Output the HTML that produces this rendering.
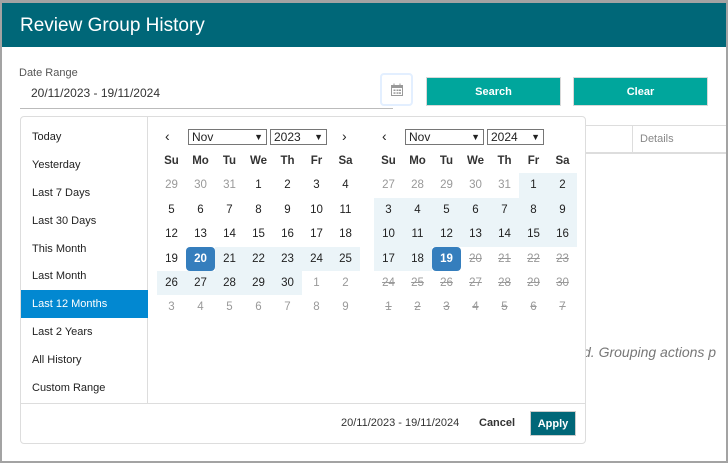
<!DOCTYPE html>
<html><head><meta charset="utf-8"><style>
*{box-sizing:border-box;margin:0;padding:0}
body{width:728px;height:463px;overflow:hidden;background:#a3a3a3;font-family:"Liberation Sans",Arial,sans-serif;position:relative;color:#222}
.abs{position:absolute}
#main{left:2px;top:3px;width:724px;height:458px;background:#fff}
#hdr{left:2px;top:3px;width:724px;height:44px;background:#006778;color:#fff;font-size:19px;padding:12px 0 0 18px}
.btn{top:77px;height:29px;background:#00a69c;color:#fff;font-weight:bold;font-size:11px;text-align:center;line-height:29px;border:1px solid #d8d8d8}
.g{display:grid;grid-template-columns:repeat(7,29px);grid-auto-rows:24.4px;font-size:11.5px}
.g div{text-align:center;line-height:24.4px}
.h{font-weight:bold;color:#333}
.o{color:#999}
.x{color:#999;text-decoration:line-through}
.r{background:#ebf4f8}
.s{background:#357ebd;color:#fff;font-weight:bold;border-radius:4px}
.sel{height:16px;border:1px solid #767676;font-size:12px;padding-left:3px;line-height:14px;background:#fff}
.sel span{position:absolute;right:3px;top:0;font-size:9px}
.rng{left:0;width:127px;height:28px;font-size:11px;padding-left:11px;line-height:28px;color:#222}
</style></head><body>
<div class="abs" id="main"></div>
<div class="abs" id="hdr">Review Group History</div>
<div class="abs" style="left:19px;top:67px;font-size:11px;color:#555">Date Range</div>
<div class="abs" style="left:31px;top:86px;font-size:12px;color:#333">20/11/2023 - 19/11/2024</div>
<div class="abs" style="left:20px;top:108px;width:373px;height:1px;background:#bbb"></div>
<div class="abs" style="left:380px;top:73px;width:33px;height:33px;border:2px solid #e3efff;border-radius:4px">
<svg width="14" height="14" viewBox="0 0 14 14" style="position:absolute;left:8px;top:8px"><rect x="1.5" y="2.5" width="11" height="10" fill="none" stroke="#999"/><rect x="1.5" y="2.5" width="11" height="2.5" fill="#999"/><rect x="3.5" y="0.5" width="1" height="2.5" fill="#999"/><rect x="9.5" y="0.5" width="1" height="2.5" fill="#999"/><g fill="#999"><rect x="3.5" y="6.5" width="2" height="1.5"/><rect x="6.5" y="6.5" width="2" height="1.5"/><rect x="9" y="6.5" width="2" height="1.5"/><rect x="3.5" y="9.3" width="2" height="1.5"/><rect x="6.5" y="9.3" width="2" height="1.5"/><rect x="9" y="9.3" width="2" height="1.5"/></g></svg></div>
<div class="abs btn" style="left:426px;width:135px">Search</div>
<div class="abs btn" style="left:573px;width:135px">Clear</div>
<div class="abs" style="left:585px;top:125px;width:141px;height:29px;border-top:1px solid #ddd;border-bottom:2px solid #ddd"></div>
<div class="abs" style="left:632px;top:126px;width:1px;height:27px;background:#ddd"></div>
<div class="abs" style="left:640px;top:133px;font-size:11px;color:#888">Details</div>
<div class="abs" style="left:583px;top:344px;font-size:14px;color:#777;font-style:italic;white-space:nowrap">d. Grouping actions p</div>
<div class="abs" style="left:20px;top:116px;width:566px;height:328px;background:#fff;border:1px solid #ddd;border-radius:4px"></div>
<div class="abs" style="left:147px;top:117px;width:1px;height:286px;background:#ddd"></div>
<div class="abs" style="left:21px;top:403px;width:564px;height:1px;background:#ddd"></div>
<div class="abs" style="left:21px;top:123px;width:127px">
<div class="abs rng" style="top:0">Today</div>
<div class="abs rng" style="top:28px">Yesterday</div>
<div class="abs rng" style="top:56px">Last 7 Days</div>
<div class="abs rng" style="top:84px">Last 30 Days</div>
<div class="abs rng" style="top:112px">This Month</div>
<div class="abs rng" style="top:139px">Last Month</div>
<div class="abs rng" style="top:167px;background:#0288d1;color:#fff">Last 12 Months</div>
<div class="abs rng" style="top:195px">Last 2 Years</div>
<div class="abs rng" style="top:223px">All History</div>
<div class="abs rng" style="top:251px">Custom Range</div>
</div>
<div class="abs" style="left:165px;top:128px;font-size:14px">‹</div>
<div class="abs sel" style="left:188px;top:129px;width:79px">Nov<span>▼</span></div>
<div class="abs sel" style="left:270px;top:129px;width:57px">2023<span>▼</span></div>
<div class="abs" style="left:342px;top:128px;font-size:14px">›</div>
<div class="abs" style="left:382px;top:128px;font-size:14px">‹</div>
<div class="abs sel" style="left:405px;top:129px;width:79px">Nov<span>▼</span></div>
<div class="abs sel" style="left:487px;top:129px;width:57px">2024<span>▼</span></div>
<div class="abs g" style="left:157px;top:149px">
<div class="h">Su</div><div class="h">Mo</div><div class="h">Tu</div><div class="h">We</div><div class="h">Th</div><div class="h">Fr</div><div class="h">Sa</div>
<div class="o">29</div><div class="o">30</div><div class="o">31</div><div>1</div><div>2</div><div>3</div><div>4</div>
<div>5</div><div>6</div><div>7</div><div>8</div><div>9</div><div>10</div><div>11</div>
<div>12</div><div>13</div><div>14</div><div>15</div><div>16</div><div>17</div><div>18</div>
<div>19</div><div class="s">20</div><div class="r">21</div><div class="r">22</div><div class="r">23</div><div class="r">24</div><div class="r">25</div>
<div class="r">26</div><div class="r">27</div><div class="r">28</div><div class="r">29</div><div class="r">30</div><div class="o">1</div><div class="o">2</div>
<div class="o">3</div><div class="o">4</div><div class="o">5</div><div class="o">6</div><div class="o">7</div><div class="o">8</div><div class="o">9</div>
</div>
<div class="abs g" style="left:374px;top:149px">
<div class="h">Su</div><div class="h">Mo</div><div class="h">Tu</div><div class="h">We</div><div class="h">Th</div><div class="h">Fr</div><div class="h">Sa</div>
<div class="o">27</div><div class="o">28</div><div class="o">29</div><div class="o">30</div><div class="o">31</div><div class="r">1</div><div class="r">2</div>
<div class="r">3</div><div class="r">4</div><div class="r">5</div><div class="r">6</div><div class="r">7</div><div class="r">8</div><div class="r">9</div>
<div class="r">10</div><div class="r">11</div><div class="r">12</div><div class="r">13</div><div class="r">14</div><div class="r">15</div><div class="r">16</div>
<div class="r">17</div><div class="r">18</div><div class="s">19</div><div class="x">20</div><div class="x">21</div><div class="x">22</div><div class="x">23</div>
<div class="x">24</div><div class="x">25</div><div class="x">26</div><div class="x">27</div><div class="x">28</div><div class="x">29</div><div class="x">30</div>
<div class="x">1</div><div class="x">2</div><div class="x">3</div><div class="x">4</div><div class="x">5</div><div class="x">6</div><div class="x">7</div>
</div>
<div class="abs" style="left:341px;top:417px;font-size:11px;color:#333">20/11/2023 - 19/11/2024</div>
<div class="abs" style="left:479px;top:417px;font-size:11px;color:#333;font-weight:bold">Cancel</div>
<div class="abs" style="left:530px;top:411px;width:46px;height:25px;background:#006778;color:#fff;font-weight:bold;font-size:11px;text-align:center;line-height:25px;border:1px solid #ccc">Apply</div>
</body></html>
